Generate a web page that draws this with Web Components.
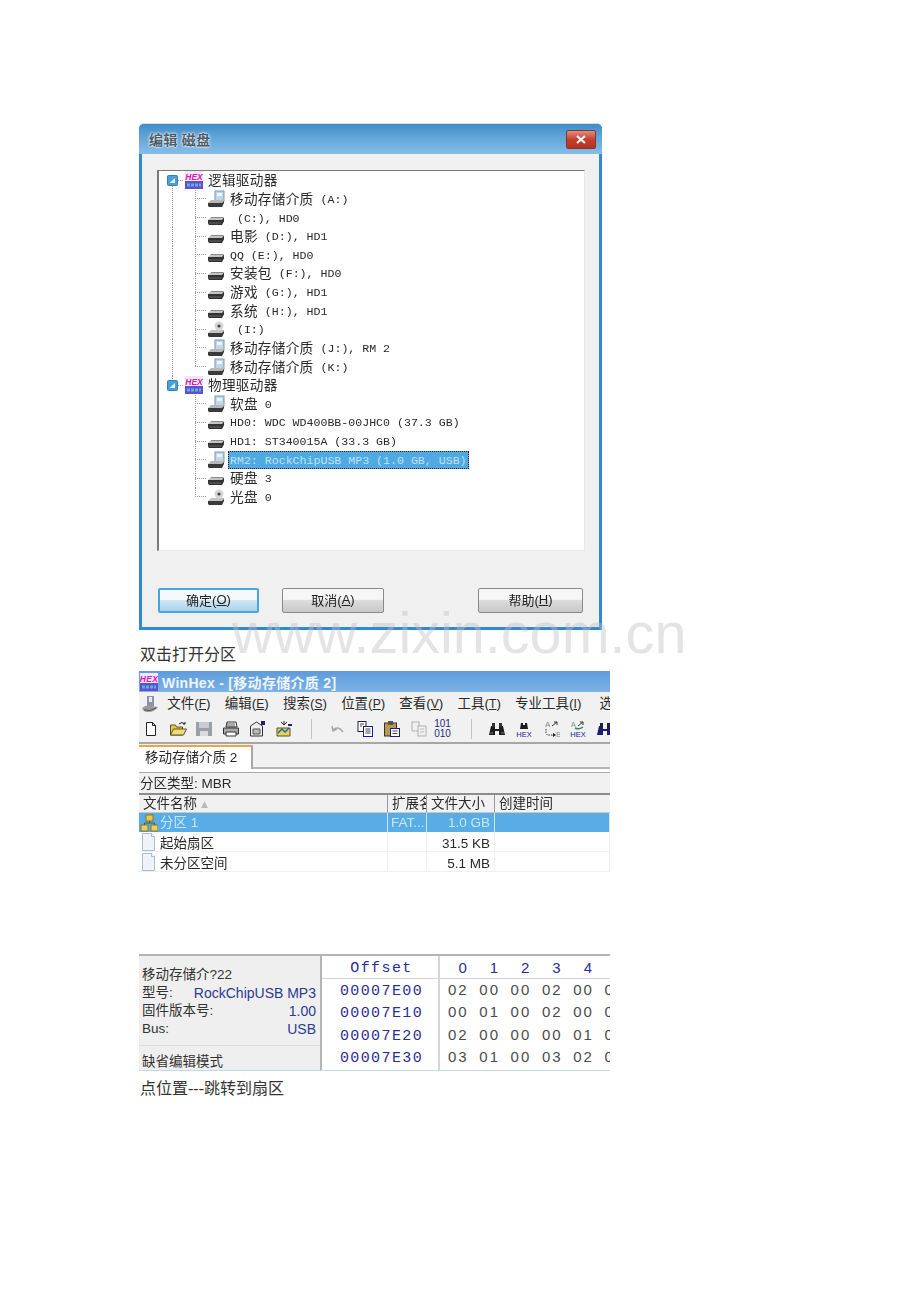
<!DOCTYPE html>
<html lang="zh">
<head>
<meta charset="utf-8">
<title>WinHex</title>
<style>
  html, body { margin: 0; background: #fff; }
</style>
</head>
<body>
<doc-page>
  <xp-dialog heading="编辑 磁盘">
    <tree-row kind="root" top>逻辑驱动器</tree-row>
    <tree-row icon="removable" outer>移动存储介质 (A:)</tree-row>
    <tree-row icon="disk" outer> (C:), HD0</tree-row>
    <tree-row icon="disk" outer>电影 (D:), HD1</tree-row>
    <tree-row icon="disk" outer>QQ (E:), HD0</tree-row>
    <tree-row icon="disk" outer>安装包 (F:), HD0</tree-row>
    <tree-row icon="disk" outer>游戏 (G:), HD1</tree-row>
    <tree-row icon="disk" outer>系统 (H:), HD1</tree-row>
    <tree-row icon="cd" outer> (I:)</tree-row>
    <tree-row icon="removable" outer>移动存储介质 (J:), RM 2</tree-row>
    <tree-row icon="removable" outer last>移动存储介质 (K:)</tree-row>
    <tree-row kind="root">物理驱动器</tree-row>
    <tree-row icon="removable">软盘 0</tree-row>
    <tree-row icon="disk">HD0: WDC WD400BB-00JHC0 (37.3 GB)</tree-row>
    <tree-row icon="disk">HD1: ST340015A (33.3 GB)</tree-row>
    <tree-row icon="removable" selected>RM2: RockChipUSB MP3 (1.0 GB, USB)</tree-row>
    <tree-row icon="disk">硬盘 3</tree-row>
    <tree-row icon="cd" last>光盘 0</tree-row>
  </xp-dialog>
  <doc-caption style="--gap-top:15px;--gap-bottom:6px">双击打开分区</doc-caption>
  <hex-window></hex-window>
  <doc-caption style="--gap-top:8px">点位置---跳转到扇区</doc-caption>
</doc-page>

<script>
const CJK_SANS = '"Noto Sans CJK SC"';

const ICONS = {
  disk: `<path d="M1 11l3-3h13v2l-2 2H2z" fill="#c4c4c4"/><path d="M1 11h14l2-2.500V12q0 1-1 2l-1 2H2q-1-1-1-2z" fill="#333"/><path d="M4 8.500h12" stroke="#8c8c8c"/><path d="M2 14h12" stroke="#666"/>`,
  removable: `<rect x="8" y="1" width="9" height="10" fill="#bcd8ea" stroke="#7b97ad"/><rect x="10" y="3" width="5" height="3" fill="#eef6fb"/><path d="M1 13l3-3h10l3-1v3l-2 3H2z" fill="#b8b8b8"/><path d="M1 13h14l2-2v2l-2 4H2l-1-1z" fill="#3a3a3a"/>`,
  cd: `<path d="M1 13l3-3h13v2l-2 3H2z" fill="#c4c4c4"/><path d="M1 13h14l2-2v2l-2 4H2l-1-1z" fill="#3a3a3a"/><circle cx="12" cy="6" r="4.500" fill="#d6d6d6"/><circle cx="12" cy="6" r="1.600" fill="#444"/>`,
  expander: `<rect x=".5" y=".5" width="10" height="10" rx="1" fill="#4d9fdc" stroke="#2d7fc0"/><path d="M2.500 8L8 3v5z" fill="#e8f4fc"/>`,
  hex: `<rect x="1" y="0" width="18" height="10" fill="#f1e6f6"/><text x="10" y="8.500" text-anchor="middle" font-family="Liberation Sans" font-size="8.500" font-weight="700" font-style="italic" fill="#d020b8">HEX</text><rect x="1" y="10" width="18" height="8" fill="#6d48d0"/><path d="M3 14h14" stroke="#3fc0d8" stroke-width="3" stroke-dasharray="3 1"/>`,
  app: `<path d="M6 1h7v10H6z" fill="#8c93a8"/><path d="M8 2h3v5H8z" fill="#e8e8f0"/><path d="M1 13q5-4 10-2l6 1q-3 5-10 5-5 0-6-4z" fill="#9b9b9b"/><path d="M3 15q6 2 12-2" stroke="#555" fill="none"/>`,
  new: `<path d="M4.500 2.500h6l3 3v10h-9z" fill="#fff" stroke="#222"/><path d="M10.500 2.500v3h3" fill="none" stroke="#222"/>`,
  open: `<path d="M1.500 15V5h5l1 2h6v8z" fill="#e8c84c" stroke="#5c5220"/><path d="M1.500 15l3-6h13l-3 6z" fill="#f0dc80" stroke="#5c5220"/><path d="M10 4q3-3 6 0m0 0v-2m0 2h-2" fill="none" stroke="#222"/>`,
  save: `<rect x="1" y="2" width="16" height="14" fill="#9aa0a8"/><rect x="4" y="2" width="10" height="6" fill="#c8ccd0"/><rect x="5" y="11" width="8" height="5" fill="#d8dadc"/>`,
  print: `<path d="M5 2h9l1 5H4z" fill="#fff" stroke="#333"/><path d="M1.500 8h15v6h-15z" fill="#aaa" stroke="#333"/><path d="M4 12h10v4H4z" fill="#fff" stroke="#333"/><path d="M5 4h8M5 6h8" stroke="#555"/>`,
  props: `<path d="M2.500 6l6-4 6 4v10h-12z" fill="#eee" stroke="#333"/><path d="M5 9h7v5H5z" fill="#bbb" stroke="#555"/><rect x="13" y="1" width="4" height="4" fill="#1c1c8c"/>`,
  importer: `<path d="M2 16V8h13v8z" fill="#e4d060" stroke="#5c5220"/><path d="M3 13l4-4 3 3 4-4" stroke="#1c6c9c" fill="none" stroke-width="1.500"/><path d="M6 2l3 3 3-3M9 5V1" stroke="#222" fill="none"/><path d="M13 5h4" stroke="#1c1c8c" stroke-width="2"/>`,
  undo: `<path d="M3 6l1 5 4-2M4 10q5-5 10 2" fill="none" stroke="#a8a8a8" stroke-width="1.500"/>`,
  copy: `<rect x="2" y="1.500" width="8" height="10" fill="#fff" stroke="#223"/><rect x="7.500" y="6.500" width="9" height="10" fill="#fff" stroke="#1c1c8c"/><path d="M4 4h4M4 6h2M9.500 9h5M9.500 11h5M9.500 13h5" stroke="#445"/>`,
  paste: `<rect x="1.500" y="3" width="12" height="13" fill="#b89a50" stroke="#333"/><rect x="5" y="1" width="5" height="4" fill="#555"/><rect x="7.500" y="8.500" width="9" height="8" fill="#fff" stroke="#1c1c8c"/><path d="M9.500 11h5M9.500 13.500h5" stroke="#445"/>`,
  pastegrey: `<rect x="2" y="2" width="7" height="9" fill="#f0f0f0" stroke="#b0b0b0"/><rect x="8" y="6" width="8" height="10" fill="#f0f0f0" stroke="#b0b0b0"/><path d="M10 9h4M10 12h4" stroke="#bbb"/>`,
  bin: `<path d="M3 6h4v3h4V6h4l2 9h-6v-4H7v4H1z" fill="#1c1c1c"/><rect x="4" y="3" width="3" height="4" fill="#333"/><rect x="11" y="3" width="3" height="4" fill="#333"/><path d="M2 13h3M13 13h3" stroke="#6c7c9c"/>`,
  binhex: `<path d="M6 3h2v2h2V3h2l1 6H5z" fill="#1c1c1c"/><text x="9" y="16.500" text-anchor="middle" font-family="Liberation Sans" font-size="7.500" fill="#1c1c9c">HEX</text>`,
  ab: `<text x="3" y="7" font-family="Liberation Sans" font-size="8" fill="#888">A</text><text x="14" y="17" font-family="Liberation Sans" font-size="8" fill="#888">B</text><path d="M10 6l5-4m0 0h-3m3 0v3" stroke="#333" fill="none"/><path d="M4 9v4q0 2 3 2h6" stroke="#333" stroke-dasharray="1.500 1" fill="none"/><path d="M11 13l3 2-3 2z" fill="#222"/>`,
  abhex: `<text x="2" y="7" font-family="Liberation Sans" font-size="7" fill="#888">A</text><path d="M9 6l5-4m0 0h-3m3 0v3" stroke="#333" fill="none"/><path d="M6 8q4 2 8-1" stroke="#2a8a6a" fill="none" stroke-width="1.500"/><text x="9" y="16.500" text-anchor="middle" font-family="Liberation Sans" font-size="7.500" fill="#1c1c9c">HEX</text>`,
  bindark: `<path d="M3 6h4v3h4V6h4l2 9h-6v-4H7v4H1z" fill="#1c1c70"/><rect x="4" y="3" width="3" height="4" fill="#223"/><rect x="11" y="3" width="3" height="4" fill="#223"/>`,
  partition: `<rect x="6" y="1" width="7" height="6" fill="#e8c84c" stroke="#8c7a20"/><rect x="1" y="11" width="7" height="6" fill="#e8d060" stroke="#8c7a20"/><rect x="11" y="11" width="7" height="6" fill="#e8d060" stroke="#8c7a20"/><path d="M4.500 11V9h10v2M9.500 7v2" stroke="#555" fill="none"/>`,
  doc: `<path d="M2.500 .5h9l3 3v14h-12z" fill="#eef3fa" stroke="#a8bcd4"/><path d="M11.500 .5v3h3" fill="#fff" stroke="#a8bcd4"/>`,
  close: `<path d="M11 6l8 7M19 6l-8 7" stroke="#fff" stroke-width="2.200" fill="none"/>`
};

class WinIcon extends HTMLElement {
  connectedCallback() {
    const w = this.getAttribute("w") || 18;
    const h = this.getAttribute("h") || w;
    this.attachShadow({ mode: "open" }).innerHTML = `
      <style>:host { display: block; width: ${w}px; height: ${h}px; flex: none; } svg { display: block; }</style>
      <svg width="${w}" height="${h}" viewBox="0 0 ${w} ${h}">${ICONS[this.getAttribute("name")]}</svg>`;
  }
}

class DocPage extends HTMLElement {
  connectedCallback() {
    this.attachShadow({ mode: "open" }).innerHTML = `
      <style>
        :host {
          display: block;
          position: relative;
          box-sizing: border-box;
          width: 920px;
          height: 1302px;
          padding: 124px 0 0 139px;
          overflow: hidden;
        }
        .mark {
          position: absolute;
          left: 232px;
          top: 605px;
          font: 57.600px/1 "Liberation Sans", sans-serif;
          color: rgba(190, 190, 190, .42);
          white-space: nowrap;
        }
      </style>
      <slot></slot>
      <div class="mark">www.zixin.com.cn</div>`;
  }
}

class DocCaption extends HTMLElement {
  connectedCallback() {
    this.attachShadow({ mode: "open" }).innerHTML = `
      <style>
        :host {
          display: block;
          margin-top: var(--gap-top, 0);
          margin-bottom: var(--gap-bottom, 0);
          padding-left: 1px;
          height: 20px;
          font: 16px/20px "Liberation Serif", ${CJK_SANS}, serif;
          color: #333;
        }
      </style>
      <slot></slot>`;
  }
}

class XpButton extends HTMLElement {
  connectedCallback() {
    this.attachShadow({ mode: "open" }).innerHTML = `
      <style>
        :host {
          display: flex;
          flex: none;
          align-items: center;
          justify-content: center;
          box-sizing: border-box;
          height: 25px;
          width: var(--w);
          padding-bottom: 2px;
          border: 1px solid #8a8a8a;
          border-radius: 2px;
          background: linear-gradient(#f6f6f6 0 45%, #dcdcdc 50%, #c8c8c8 100%);
          font: 13px "Liberation Sans", ${CJK_SANS}, sans-serif;
          color: #222;
        }
        :host([primary]) {
          border: 2px solid #4aa3dc;
          background: linear-gradient(#f4f9fc 0 45%, #cfe6f4 50%, #a9d3ec 100%);
        }
      </style>
      <slot></slot>`;
  }
}

class TreeRow extends HTMLElement {
  connectedCallback() {
    const root = this.getAttribute("kind") === "root";
    const text = this.textContent;
    // Latin stays monospaced, CJK runs get the double-width size
    const runs = text.split(/([\u4e00-\u9fff]+)/).map((s, i) => i % 2 ? `<b>${s}</b>` : s).join("");
    const dots = "repeating-linear-gradient(to bottom, #9a9a9a 0 1px, transparent 1px 2px)";
    const hdots = "repeating-linear-gradient(to right, #9a9a9a 0 1px, transparent 1px 2px)";
    const layers = [];
    if (root) {
      layers.push(`${dots} 13px ${this.hasAttribute("top") ? "100%" : "0"} / 1px 50% no-repeat`);
      layers.push(`${hdots} 19px 50% / 6px 1px no-repeat`);
    } else {
      if (this.hasAttribute("outer")) layers.push(`${dots} 13px 0 / 1px 100% no-repeat`);
      layers.push(`${dots} 36px 0 / 1px ${this.hasAttribute("last") ? "50%" : "100%"} no-repeat`);
      layers.push(`${hdots} 36px 50% / 12px 1px no-repeat`);
    }
    this.attachShadow({ mode: "open" }).innerHTML = `
      <style>
        :host {
          display: flex;
          align-items: center;
          height: 18.64px;
          padding-left: ${root ? 8 : 48}px;
          background: ${layers.join(",")};
          font: 11.6px/18px "Liberation Mono", ${CJK_SANS}, monospace;
          color: #2a2a2a;
        }
        b { font: 13.6px/1px ${CJK_SANS}, sans-serif; letter-spacing: .33px; vertical-align: -1px; }
        .label { margin-left: ${root ? 3 : 4}px; padding: 1px 1px 0; height: 18px; box-sizing: border-box; white-space: pre; }
        :host([selected]) .label {
          margin-left: 3px;
          background: #4fa9e2;
          color: #bfe2f6;
          outline: 1px dotted #1c1c1c;
          outline-offset: -1px;
          padding: 0 2px;
          line-height: 19px;
        }
        win-icon.exp { margin-right: 6px; }
      </style>
      ${root
        ? `<win-icon class="exp" name="expander" w="11"></win-icon><win-icon name="hex" w="20" h="18"></win-icon>`
        : `<win-icon name="${this.getAttribute("icon")}"></win-icon>`}
      <span class="label">${runs}</span>`;
  }
}

class XpDialog extends HTMLElement {
  connectedCallback() {
    this.attachShadow({ mode: "open" }).innerHTML = `
      <style>
        :host {
          display: flex;
          flex-direction: column;
          box-sizing: border-box;
          width: 463px;
          height: 506px;
          border: 3px solid #2f8ad0;
          border-top: 0;
          border-radius: 5px 5px 0 0;
          box-shadow: 0 -1px 0 #cfdeea;
          background: #f0f0f0;
          filter: blur(.35px);
        }
        .title {
          display: flex;
          align-items: center;
          justify-content: space-between;
          flex: none;
          height: 30px;
          margin: 0 -3px;
          padding: 0 6px 0 10px;
          border-radius: 5px 5px 0 0;
          background: linear-gradient(#3f8cc8, #5ea3d8 40%, #86bde6);
          font: 700 14px ${CJK_SANS}, sans-serif;
          letter-spacing: .5px;
          color: #4d5c68;
          text-shadow: 0 0 3px #fff, 0 0 2px #fff;
        }
        .close {
          width: 30px;
          height: 19px;
          border-radius: 2px;
          background: linear-gradient(#e08f80, #c8402c 50%, #b83020);
          border: 1px solid #7a3a32;
          box-sizing: border-box;
        }
        .body {
          display: flex;
          flex-direction: column;
          flex: 1;
          padding: 16px 15px 14px;
        }
        .tree {
          flex: none;
          box-sizing: border-box;
          height: 381px;
          width: 428px;
          background: #fff;
          border: solid;
          border-width: 1px 1px 1px 2px;
          border-color: #7a7a7a #e8e8e8 #e8e8e8 #7a7a7a;
        }
        .buttons {
          display: flex;
          margin: 37px 0 0 1px;
          gap: 23px;
        }
        .spacer { width: 48px; flex: none; }
        u { text-underline-offset: 1px; }
      </style>
      <div class="title"><span>${this.getAttribute("heading")}</span><div class="close"><win-icon name="close" w="30" h="19" style="margin:-1px"></win-icon></div></div>
      <div class="body">
        <div class="tree"><slot></slot></div>
        <div class="buttons">
          <xp-button primary style="--w:101px">确定(<u>O</u>)</xp-button>
          <xp-button style="--w:102px">取消(<u>A</u>)</xp-button>
          <div class="spacer"></div>
          <xp-button style="--w:105px">帮助(<u>H</u>)</xp-button>
        </div>
      </div>`;
  }
}

class MenuBar extends HTMLElement {
  connectedCallback() {
    const items = [["文件", "F"], ["编辑", "E"], ["搜索", "S"], ["位置", "P"], ["查看", "V"], ["工具", "T"], ["专业工具", "I"]];
    this.attachShadow({ mode: "open" }).innerHTML = `
      <style>
        :host {
          display: flex;
          align-items: center;
          gap: 14.200px;
          box-sizing: border-box;
          height: 23px;
          padding: 0 0 4px 2px;
          background: #f1f1f1;
          overflow: hidden;
          white-space: nowrap;
          font: 13.500px "Liberation Sans", ${CJK_SANS}, sans-serif;
          color: #2a2a2a;
        }
        win-icon { margin: 4px -6px 0 0; }
        span { flex: none; }
        span:last-child { margin-left: 4px; }
        u { font-size: 12px; }
      </style>
      <win-icon name="app"></win-icon>
      ${items.map(([t, k]) => `<span>${t}(<u>${k}</u>)</span>`).join("")}
      <span>选</span>`;
  }
}

class ToolBar extends HTMLElement {
  connectedCallback() {
    const left = ["new", "open", "save", "print", "props", "importer"];
    const mid = ["undo", "copy", "paste", "pastegrey"];
    const right = ["bin", "binhex", "ab", "abhex", "bindark"];
    const row = list => list.map(n => `<win-icon name="${n}"></win-icon>`).join("");
    this.attachShadow({ mode: "open" }).innerHTML = `
      <style>
        :host {
          display: flex;
          align-items: center;
          height: 29px;
          padding-left: 3px;
          background: #f1f1f1;
          border-bottom: 2px solid #a6a6a6;
          box-sizing: border-box;
          overflow: hidden;
        }
        .group { display: flex; align-items: center; gap: 9px; flex: none; }
        .sep { width: 1px; height: 20px; background: #c4c4c4; margin: 0 17px 0 18px; flex: none; }
        .sep.b { margin-right: 16px; }
        .group.l { gap: 8.500px; }
        .bits { font: 10px/10px "Liberation Sans", sans-serif; color: #1c2c7c; text-align: center; width: 20px; flex: none; margin-left: -4px; }
      </style>
      <div class="group l">${row(left)}</div>
      <div class="sep"></div>
      <div class="group">${row(mid)}<div class="bits">101<br>010</div></div>
      <div class="sep b"></div>
      <div class="group">${row(right)}</div>`;
  }
}

class FileList extends HTMLElement {
  connectedCallback() {
    const rows = [
      ["partition", "分区 1", "FAT...", "1.0 GB", "sel"],
      ["doc", "起始扇区", "", "31.5 KB", ""],
      ["doc", "未分区空间", "", "5.1 MB", ""]
    ];
    this.attachShadow({ mode: "open" }).innerHTML = `
      <style>
        :host {
          display: block;
          height: 161px;
          background: #fff;
          font: 13.500px "Liberation Sans", ${CJK_SANS}, sans-serif;
          color: #2a2a2a;
        }
        .row {
          display: grid;
          grid-template-columns: 249px 39px 68px 115px;
          height: 20px;
          line-height: 24px;
          box-sizing: border-box;
          border-bottom: 1px solid #f0f0f0;
        }
        .row > div { white-space: nowrap; overflow: hidden; border-right: 1px solid #eee; padding: 0 3px; box-sizing: border-box; }
        .head { height: 20px; background: #f1f1f1; border-top: 2px solid #8c8c8c; border-bottom: 1px solid #c8c8c8; line-height: 18px; }
        .head > div { border-right: 1px solid #999; padding-left: 4px; }
        .head i { color: #bbb; font: 9px "DejaVu Sans", sans-serif; margin-left: 4px; vertical-align: 1px; }
        .row.sel { background: #59ade6; color: #c9e6f8; height: 19px; border: 0; line-height: 19px; }
        .sel > div { border-right-color: #cfe6f5; }
        .name { display: flex; gap: 2px; padding: 0 !important; }
        .name win-icon { margin: 1px 0 0 1px; }
        .num { text-align: right; padding-right: 4px !important; }
      </style>
      <div class="row head"><div>文件名称<i>▲</i></div><div>扩展名</div><div>文件大小</div><div style="border:0">创建时间</div></div>
      ${rows.map(([ic, name, ext, size, cls]) => `
        <div class="row ${cls}">
          <div class="name"><win-icon name="${ic}" w="18" h="18"></win-icon><span>${name}</span></div>
          <div>${ext}</div><div class="num">${size}</div><div></div>
        </div>`).join("")}`;
  }
}

class DrivePanel extends HTMLElement {
  connectedCallback() {
    this.attachShadow({ mode: "open" }).innerHTML = `
      <style>
        :host {
          display: flex;
          flex-direction: column;
          flex: none;
          box-sizing: border-box;
          width: 183px;
          padding: 10px 4px 0 3px;
          background: #efefef;
          border-right: 2px solid #b4b4b4;
          font: 13.500px/18px "Liberation Sans", ${CJK_SANS}, sans-serif;
          color: #333;
        }
        .kv { display: flex; justify-content: space-between; white-space: nowrap; }
        .kv span:last-child { color: #2c3a94; font-size: 14px; }
        .mode { margin: 7px -4px 0 -3px; padding: 7px 0 0 3px; border-top: 1px solid #dcdcdc; }
      </style>
      <div>移动存储介?22</div>
      <div class="kv"><span>型号:</span><span>RockChipUSB MP3</span></div>
      <div class="kv"><span>固件版本号:</span><span>1.00</span></div>
      <div class="kv"><span>Bus:</span><span>USB</span></div>
      <div class="mode">缺省编辑模式</div>`;
  }
}

class HexView extends HTMLElement {
  connectedCallback() {
    const rows = [
      ["00007E00", "02 00 00 02 00 0"],
      ["00007E10", "00 01 00 02 00 0"],
      ["00007E20", "02 00 00 00 01 0"],
      ["00007E30", "03 01 00 03 02 0"]
    ];
    const cells = s => s.split(" ").map(c => `<span>${c}</span>`).join("");
    this.attachShadow({ mode: "open" }).innerHTML = `
      <style>
        :host {
          display: flex;
          flex-direction: column;
          flex: 1;
          overflow: hidden;
          background: #fff;
          font: 15px/22.3px "Liberation Mono", monospace;
          letter-spacing: 1.400px;
          color: #4c4c4c;
        }
        .row { display: grid; grid-template-columns: 118px 1fr; height: 22.300px; flex: none; }
        .row:last-child { flex: 1; }
        .off { color: #2c2c96; text-align: center; padding-left: 3px; border-right: 2px solid #d4d4dc; box-sizing: border-box; line-height: 25px; }
        .data { display: grid; grid-template-columns: repeat(6, 31.300px); padding-left: 8px; white-space: nowrap; font-family: "Liberation Sans", sans-serif; letter-spacing: 2px; }
        .row.head { height: 23px; border-bottom: 1px solid #d4d4dc; box-sizing: border-box; color: #2c2c96; line-height: 23px; }
        .head .data span { text-align: right; padding-right: 10.500px; }
      </style>
      <div class="row head"><div class="off">Offset</div><div class="data">${cells("0 1 2 3 4")}</div></div>
      ${rows.map(([o, d]) => `<div class="row"><div class="off">${o}</div><div class="data">${cells(d)}</div></div>`).join("")}`;
  }
}

class HexWindow extends HTMLElement {
  connectedCallback() {
    this.attachShadow({ mode: "open" }).innerHTML = `
      <style>
        :host {
          display: flex;
          flex-direction: column;
          width: 471px;
          height: 400px;
          overflow: hidden;
          filter: blur(.35px);
        }
        .title {
          display: flex;
          align-items: center;
          gap: 3px;
          height: 21px;
          flex: none;
          background: linear-gradient(#5d9cdc, #7cb2e4);
          font: 700 14px "Liberation Sans", ${CJK_SANS}, sans-serif;
          letter-spacing: .3px;
          color: #eef4fb;
          white-space: nowrap;
        }
        .tabs {
          display: flex;
          align-items: flex-end;
          flex: none;
          height: 25px;
          box-sizing: border-box;
          margin-bottom: 3px;
          background: #f1f1f1;
          border-bottom: 2px solid #b4b4b4;
        }
        .tab {
          box-sizing: border-box;
          width: 114px;
          height: 24px;
          padding-left: 6px;
          background: #fff;
          border-top: 2px solid #e8a848;
          border-right: 2px solid #a8a8a8;
          font: 13.500px/21px "Liberation Sans", ${CJK_SANS}, sans-serif;
          color: #2a2a2a;
          margin-bottom: -2px;
        }
        .type {
          flex: none;
          height: 21px;
          box-sizing: border-box;
          padding-left: 1px;
          background: #f1f1f1;
          border-top: 1px solid #aaa;
          font: 13.500px/21px "Liberation Sans", ${CJK_SANS}, sans-serif;
          color: #2a2a2a;
        }
        .lower {
          display: flex;
          flex: 1;
          min-height: 0;
          border-top: 2px solid #b4b4b4;
          border-bottom: 1px solid #c6d8ea;
        }
      </style>
      <div class="title"><win-icon name="hex" w="20" h="18"></win-icon><span>WinHex - [移动存储介质 2]</span></div>
      <menu-bar></menu-bar>
      <tool-bar></tool-bar>
      <div class="tabs"><div class="tab">移动存储介质 2</div></div>
      <div class="type">分区类型: MBR</div>
      <file-list></file-list>
      <div class="lower"><drive-panel></drive-panel><hex-view></hex-view></div>`;
  }
}

customElements.define("win-icon", WinIcon);
customElements.define("doc-page", DocPage);
customElements.define("doc-caption", DocCaption);
customElements.define("xp-button", XpButton);
customElements.define("tree-row", TreeRow);
customElements.define("xp-dialog", XpDialog);
customElements.define("menu-bar", MenuBar);
customElements.define("tool-bar", ToolBar);
customElements.define("file-list", FileList);
customElements.define("drive-panel", DrivePanel);
customElements.define("hex-view", HexView);
customElements.define("hex-window", HexWindow);
</script>
</body>
</html>
